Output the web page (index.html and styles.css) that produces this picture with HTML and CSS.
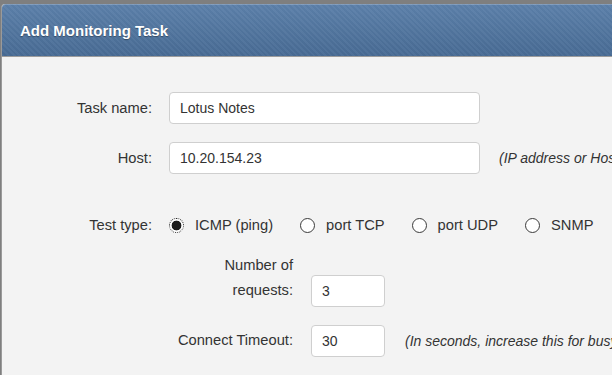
FILE: index.html
```html
<!DOCTYPE html>
<html>
<head>
<meta charset="utf-8">
<link rel="stylesheet" href="styles.css">
</head>
<body>
<div class="frame">
  <div class="modal">
    <div class="modal-header">
      <h1 class="modal-title">Add Monitoring Task</h1>
    </div>
    <div class="modal-body">
      <div class="row row-center">
        <label class="label">Task name:</label>
        <input class="field field-wide" type="text" value="Lotus Notes">
      </div>
      <div class="row row-center">
        <label class="label">Host:</label>
        <input class="field field-wide" type="text" value="10.20.154.23">
        <span class="hint">(IP address or Host name)</span>
      </div>
      <div class="row row-radio">
        <label class="label">Test type:</label>
        <div class="radios">
          <span class="radio-item"><span class="radio checked"></span>ICMP (ping)</span>
          <span class="radio-item"><span class="radio"></span>port TCP</span>
          <span class="radio-item"><span class="radio"></span>port UDP</span>
          <span class="radio-item"><span class="radio"></span>SNMP</span>
        </div>
      </div>
      <div class="sub">
        <div class="row row-end">
          <label class="sublabel">Number of requests:</label>
          <input class="field field-small" type="text" value="3">
        </div>
        <div class="row row-end">
          <label class="sublabel">Connect Timeout:</label>
          <input class="field field-small" type="text" value="30">
          <span class="hint hint-end">(In seconds, increase this for busy servers)</span>
        </div>
      </div>
    </div>
  </div>
</div>
</body>
</html>
```

FILE: styles.css
```css
html, body {
  margin: 0;
  padding: 0;
  overflow: hidden;
  width: 612px;
  height: 375px;
}
body {
  font-family: "Liberation Sans", Arial, sans-serif;
  font-size: 14px;
  color: #333;
}
.frame {
  background: #7f7f7f;
  padding: 4px 0 0 1px;
  height: 371px;
}
.modal {
  width: 900px;
  height: 100%;
  background: #f3f3f3;
  border-left: 1px solid #9a9a9a;
  border-top-left-radius: 4px;
}
.modal-header {
  height: 52px;
  display: flex;
  align-items: center;
  padding-left: 18px;
  border-bottom: 1px solid #9c9c9c;
  border-top-left-radius: 4px;
  background:
    repeating-linear-gradient(45deg, rgba(255,255,255,0.035) 0 2px, rgba(0,0,0,0.02) 2px 4px),
    linear-gradient(#5c80aa, #486b94);
  box-shadow: inset 0 1px 0 rgba(255,255,255,0.22);
}
.modal-title {
  margin: 0;
  font-size: 15px;
  font-weight: bold;
  color: #fff;
  text-shadow: 0 1px 1px rgba(0,0,0,0.35);
}
.modal-body {
  padding-top: 35px;
}
.row {
  display: flex;
  gap: 17px;
  white-space: nowrap;
}
.row-center {
  align-items: center;
  margin-bottom: 18px;
}
.row-radio {
  align-items: center;
  height: 20px;
  margin-top: 41px;
  margin-bottom: 18px;
}
.row-end {
  align-items: flex-end;
  margin-bottom: 18px;
}
.label {
  width: 150px;
  text-align: right;
  flex: none;
  font-size: 14.7px;
}
.field {
  box-sizing: border-box;
  height: 32px;
  border: 1px solid #cfcfcf;
  border-radius: 4px;
  background: #fff;
  padding: 0 10px;
  font-family: "Liberation Sans", Arial, sans-serif;
  font-size: 14px;
  color: #333;
  flex: none;
}
.field-wide {
  width: 311px;
}
.field-small {
  width: 74px;
}
.hint {
  font-style: italic;
  color: #333;
  margin-left: 2px;
}
.hint-end {
  padding-bottom: 8px;
}
.radios {
  display: flex;
  align-items: center;
  font-size: 14.7px;
}
.radio-item {
  display: inline-flex;
  align-items: center;
  gap: 11px;
  margin-right: 27px;
}
.radio {
  box-sizing: border-box;
  width: 15px;
  height: 15px;
  border: 1.5px solid #3a3a3a;
  border-radius: 50%;
  background: #fff;
}
.radio.checked {
  border: 1px dotted #222;
  background: radial-gradient(circle, #1c1c1c 0 4.6px, #fff 5.2px);
}
.sub {
  margin-left: 166px;
}
.sub .row {
  gap: 18px;
}
.sublabel {
  width: 125px;
  text-align: right;
  white-space: normal;
  line-height: 25px;
  padding-bottom: 4px;
  flex: none;
  font-size: 14.7px;
}
```
